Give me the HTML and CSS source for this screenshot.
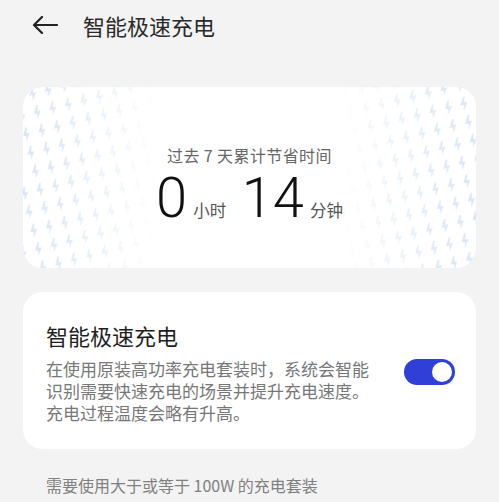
FILE: index.html
```html
<!DOCTYPE html>
<html lang="zh-CN">
<head>
    <meta charset="UTF-8">
    <meta name="viewport" content="width=device-width, initial-scale=1.0">
    <title>智能极速充电</title>
    <link rel="stylesheet" href="styles.css">
</head>
<body>

    <div class="header">
        <svg class="back" width="26" height="18" viewBox="0 0 26 18">
            <path d="M25 9H2M10 1L2 9l8 8" fill="none" stroke="#222" stroke-width="2.2" stroke-linecap="round" stroke-linejoin="round"/>
        </svg>
        <h1>智能极速充电</h1>
    </div>

    <div class="stats">
        <svg class="bolts" width="100%" height="100%">
            <defs>
                <pattern id="bolt" width="16" height="19" patternUnits="userSpaceOnUse" patternTransform="rotate(-14)">
                    <path d="M8.5 2L4 10h3.4L6 16l5.5-8H8.2L10 2z" fill="#c9dbf1"/>
                </pattern>
                <linearGradient id="fade" x1="0" y1="0" x2="1" y2="0">
                    <stop offset="0" stop-color="#fff"/>
                    <stop offset="0.08" stop-color="#ddd"/>
                    <stop offset="0.3" stop-color="#000"/>
                    <stop offset="0.7" stop-color="#000"/>
                    <stop offset="0.92" stop-color="#ddd"/>
                    <stop offset="1" stop-color="#fff"/>
                </linearGradient>
                <mask id="edges">
                    <rect width="100%" height="100%" fill="url(#fade)"/>
                </mask>
            </defs>
            <rect width="100%" height="100%" fill="url(#bolt)" mask="url(#edges)"/>
        </svg>
        <div class="stats-label">过去 7 天累计节省时间</div>
        <div class="stats-value">
            <span class="num">0</span><span class="unit">小时</span>
            <span class="num">14</span><span class="unit">分钟</span>
        </div>
    </div>

    <div class="card">
        <div class="card-text">
            <h2>智能极速充电</h2>
            <p>在使用原装高功率充电套装时，系统会智能识别需要快速充电的场景并提升充电速度。充电过程温度会略有升高。</p>
        </div>
        <div class="switch on"><span class="knob"></span></div>
    </div>

    <p class="note">需要使用大于或等于 100W 的充电套装</p>

</body>
</html>
```

FILE: styles.css
```css
body {
    margin: 0;
    background-color: #f3f3f3;
    font-family: "Noto Sans CJK SC", "Noto Sans", sans-serif;
    color: #222;
}

.header {
    display: flex;
    align-items: center;
    height: 50px;
    padding-left: 32px;
}

.header h1 {
    margin: 0 0 0 25px;
    font-size: 22px;
    font-weight: 400;
    color: #2a2a2a;
}

.stats {
    position: relative;
    overflow: hidden;
    margin: 37px 23px 0;
    height: 181px;
    border-radius: 20px;
    background-color: #fff;
    text-align: center;
}

/* decorative bolt pattern behind the numbers */
.bolts {
    position: absolute;
    left: 0;
    top: 0;
    opacity: 0.7;
}

.stats-label {
    position: relative;
    padding-top: 56px;
    font-size: 16px;
    line-height: 24px;
    letter-spacing: 0.4px;
    color: #666;
}

.stats-value {
    position: relative;
    margin-top: 3px;
    color: #111;
}

.num {
    font-family: Roboto, "Noto Sans", sans-serif;
    font-weight: 300;
    font-size: 56px;
    line-height: 56px;
}

.unit {
    margin: 0 12px 0 6px;
    font-size: 16.5px;
    color: #555;
}

.unit:last-child {
    margin-right: 0;
}

.card {
    display: flex;
    align-items: center;
    margin: 24px 23px 0;
    padding: 28px 21px 25px 23px;
    border-radius: 20px;
    background-color: #fff;
}

.card-text {
    flex: 1;
}

.card h2 {
    margin: 0;
    font-size: 22px;
    line-height: 30px;
    font-weight: 400;
    color: #1e1e1e;
}

.card p {
    margin: 8px 0 0;
    width: 330px;
    font-size: 17px;
    line-height: 22px;
    color: #777;
}

.switch {
    width: 51px;
    height: 26px;
    border-radius: 13px;
    background-color: #2f3fd8;
    display: flex;
    align-items: center;
    justify-content: flex-end;
    padding: 0 3px;
    box-sizing: border-box;
}

.knob {
    width: 20px;
    height: 20px;
    border-radius: 50%;
    background-color: #fff;
}

.note {
    margin: 25px 0 0 46px;
    font-size: 16px;
    line-height: 22px;
    color: #808080;
}
```
